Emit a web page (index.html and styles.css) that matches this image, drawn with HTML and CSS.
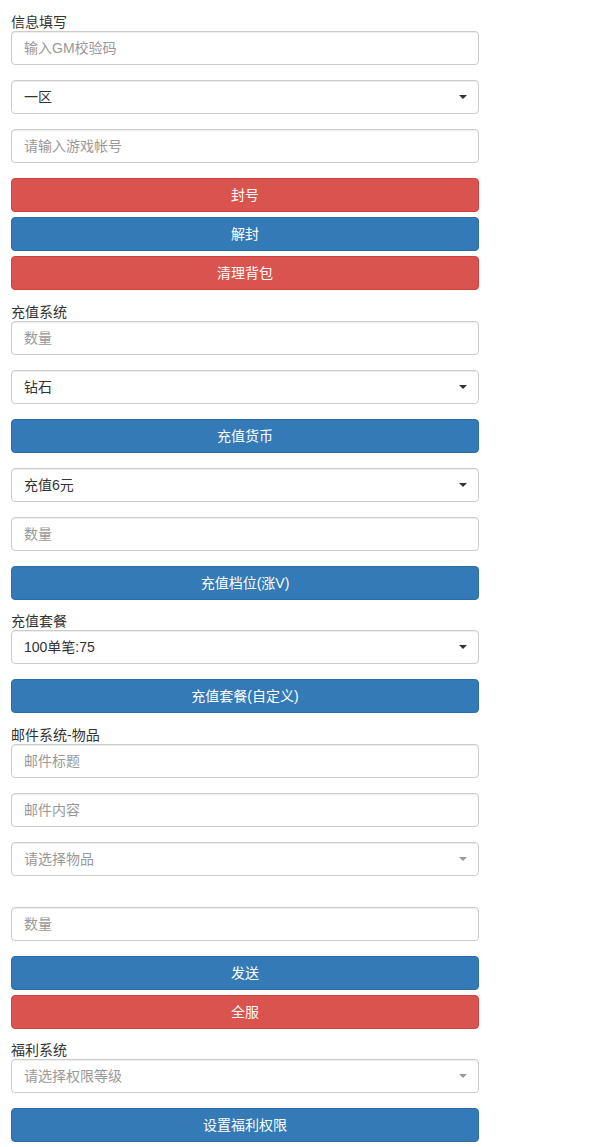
FILE: index.html
```html
<!DOCTYPE html>
<html lang="zh-CN">
<head>
  <meta charset="UTF-8">
  <meta name="viewport" content="width=device-width, initial-scale=1.0">
  <title>GM后台</title>
  <link rel="stylesheet" href="styles.css">
</head>
<body>
  <div class="gm-panel">

    <!-- 信息填写 -->
    <label class="section-label">信息填写</label>
    <div class="form-group">
      <input type="text" class="form-control" placeholder="输入GM校验码">
    </div>
    <div class="form-group select-wrap">
      <select class="form-control">
        <option>一区</option>
        <option>二区</option>
      </select>
    </div>
    <div class="form-group">
      <input type="text" class="form-control" placeholder="请输入游戏帐号">
    </div>
    <div class="btn-group">
      <button class="btn btn-danger">封号</button>
      <button class="btn btn-primary">解封</button>
      <button class="btn btn-danger">清理背包</button>
    </div>

    <!-- 充值系统 -->
    <label class="section-label">充值系统</label>
    <div class="form-group">
      <input type="text" class="form-control" placeholder="数量">
    </div>
    <div class="form-group select-wrap">
      <select class="form-control">
        <option>钻石</option>
        <option>金币</option>
      </select>
    </div>
    <div class="form-group">
      <button class="btn btn-primary">充值货币</button>
    </div>
    <div class="form-group select-wrap">
      <select class="form-control">
        <option>充值6元</option>
        <option>充值30元</option>
      </select>
    </div>
    <div class="form-group">
      <input type="text" class="form-control" placeholder="数量">
    </div>
    <div class="btn-group">
      <button class="btn btn-primary">充值档位(涨V)</button>
    </div>

    <!-- 充值套餐 -->
    <label class="section-label">充值套餐</label>
    <div class="form-group select-wrap">
      <select class="form-control">
        <option>100单笔:75</option>
      </select>
    </div>
    <div class="btn-group">
      <button class="btn btn-primary">充值套餐(自定义)</button>
    </div>

    <!-- 邮件系统 -->
    <label class="section-label">邮件系统-物品</label>
    <div class="form-group">
      <input type="text" class="form-control" placeholder="邮件标题">
    </div>
    <div class="form-group">
      <input type="text" class="form-control" placeholder="邮件内容">
    </div>
    <div class="form-group select2-wrap spaced">
      <div class="select2-box placeholder">请选择物品</div>
    </div>
    <div class="form-group">
      <input type="text" class="form-control" placeholder="数量">
    </div>
    <div class="btn-group">
      <button class="btn btn-primary">发送</button>
      <button class="btn btn-danger">全服</button>
    </div>

    <!-- 福利系统 -->
    <label class="section-label">福利系统</label>
    <div class="form-group select2-wrap">
      <div class="select2-box placeholder">请选择权限等级</div>
    </div>
    <div class="btn-group">
      <button class="btn btn-primary">设置福利权限</button>
    </div>

  </div>
</body>
</html>
```

FILE: styles.css
```css
* {
  margin: 0;
  padding: 0;
  box-sizing: border-box;
}

body {
  font-family: "Liberation Sans", "Noto Sans CJK SC", sans-serif;
  font-size: 14px;
  color: #333;
  background-color: #fff;
}

.gm-panel {
  width: 468px;
  margin-left: 11px;
  padding-top: 13px;
}

.section-label {
  display: block;
  height: 18px;
  line-height: 18px;
  font-size: 14px;
  font-weight: normal;
  color: #333;
}

.form-group {
  margin-bottom: 15px;
}

.form-group.spaced {
  margin-bottom: 31px;
}

.form-control {
  display: block;
  width: 100%;
  height: 34px;
  padding: 6px 12px;
  font-family: inherit;
  font-size: 14px;
  color: #555;
  background-color: #fff;
  border: 1px solid #ccc;
  border-radius: 4px;
  box-shadow: inset 0 1px 1px rgba(0, 0, 0, 0.075);
  outline: none;
}

.form-control::placeholder {
  color: #999;
}

select.form-control {
  appearance: none;
  -webkit-appearance: none;
  color: #333;
}

.select-wrap,
.select2-wrap {
  position: relative;
}

/* caret on the right of selects */
.select-wrap::after,
.select2-wrap::after {
  content: "";
  position: absolute;
  right: 12px;
  top: 15px;
  border-left: 4px solid transparent;
  border-right: 4px solid transparent;
  border-top: 4px solid #333;
  pointer-events: none;
}

.select2-wrap::after {
  border-top-color: #999;
}

.select2-box {
  height: 34px;
  line-height: 32px;
  padding: 0 12px;
  border: 1px solid #ccc;
  border-radius: 4px;
  background-color: #fff;
  box-shadow: inset 0 1px 1px rgba(0, 0, 0, 0.075);
}

.select2-box.placeholder {
  color: #999;
}

.btn-group {
  margin-bottom: 12.5px;
}

.btn {
  display: block;
  width: 100%;
  height: 34px;
  padding: 6px 12px;
  font-family: inherit;
  font-size: 14px;
  line-height: 20px;
  color: #fff;
  text-align: center;
  border: 1px solid transparent;
  border-radius: 4px;
  cursor: pointer;
}

.btn + .btn {
  margin-top: 5px;
}

.btn-primary {
  background-color: #337ab7;
  border-color: #2e6da4;
}

.btn-danger {
  background-color: #d9534f;
  border-color: #d43f3a;
}
```
